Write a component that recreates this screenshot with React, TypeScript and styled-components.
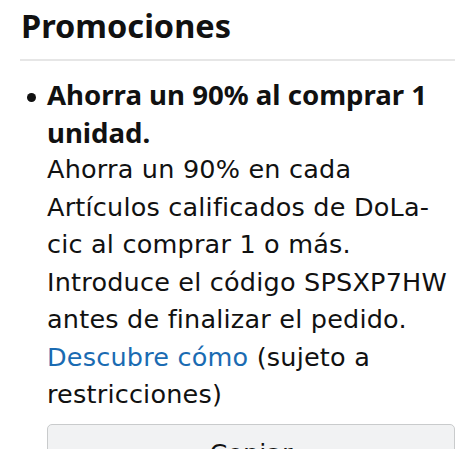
import React from "react";
import styled, { createGlobalStyle } from "styled-components";

const GlobalStyle = createGlobalStyle`
  html, body {
    margin: 0;
    padding: 0;
    background: #ffffff;
  }
  body {
    font-family: "Noto Sans", "Open Sans", Arial, sans-serif;
    color: #0f1111;
    -webkit-font-smoothing: antialiased;
  }
`;

const Section = styled.section`
  padding: 5px 20px 0 20px;
  height: 449px;
  overflow: hidden;
  box-sizing: border-box;
`;

const Title = styled.h2`
  margin: 0 0 12px 1px;
  font-size: 32.5px;
  line-height: 42px;
  font-weight: 700;
  color: #111111;
`;

const Divider = styled.hr`
  margin: 0;
  border: 0;
  height: 2px;
  background: #e6e6e6;
`;

const List = styled.ul`
  margin: 15px 0 0 0;
  padding: 0 0 0 27px;
  list-style: none;
`;

const Item = styled.li`
  position: relative;
  line-height: 37.5px;
  color: #111111;

  &::before {
    content: "";
    position: absolute;
    left: -20px;
    top: 17px;
    width: 9px;
    height: 9px;
    border-radius: 50%;
    background: #111111;
  }
`;

const Headline = styled.strong`
  display: block;
  font-size: 27.6px;
  font-weight: 700;
`;

const Line = styled.span`
  display: block;
  font-family: "DejaVu Sans", "Noto Sans", sans-serif;
  font-size: 25.5px;
  letter-spacing: 0.2px;
  white-space: nowrap;
`;

const Link = styled.a`
  color: #1a6bb2;
  text-decoration: none;
`;

const CopyButton = styled.button`
  display: flex;
  justify-content: center;
  align-items: flex-start;
  width: 100%;
  height: 58px;
  margin-top: 10px;
  padding: 10px 0 0 0;
  box-sizing: border-box;
  border: 1px solid #c9cbcc;
  border-radius: 5px;
  background: #f1f2f3;
  font-family: "DejaVu Sans", "Noto Sans", sans-serif;
  font-size: 25.5px;
  line-height: 37px;
  color: #111111;
`;

const details = [
  "Ahorra un 90% en cada",
  "Artículos calificados de DoLa-",
  "cic al comprar 1 o más.",
  "Introduce el código SPSXP7HW",
  "antes de finalizar el pedido.",
];

const App = () => {
  return (
    <>
      <GlobalStyle />
      <Section>
        <Title>Promociones</Title>
        <Divider />
        <List>
          <Item>
            <Headline>
              Ahorra un 90% al comprar 1<br />
              unidad.
            </Headline>
            {details.map((text) => (
              <Line key={text}>{text}</Line>
            ))}
            <Line>
              <Link href="#">Descubre cómo</Link> (sujeto a
            </Line>
            <Line>restricciones)</Line>
            <CopyButton>Copiar</CopyButton>
          </Item>
        </List>
      </Section>
    </>
  );
};

export default App;
